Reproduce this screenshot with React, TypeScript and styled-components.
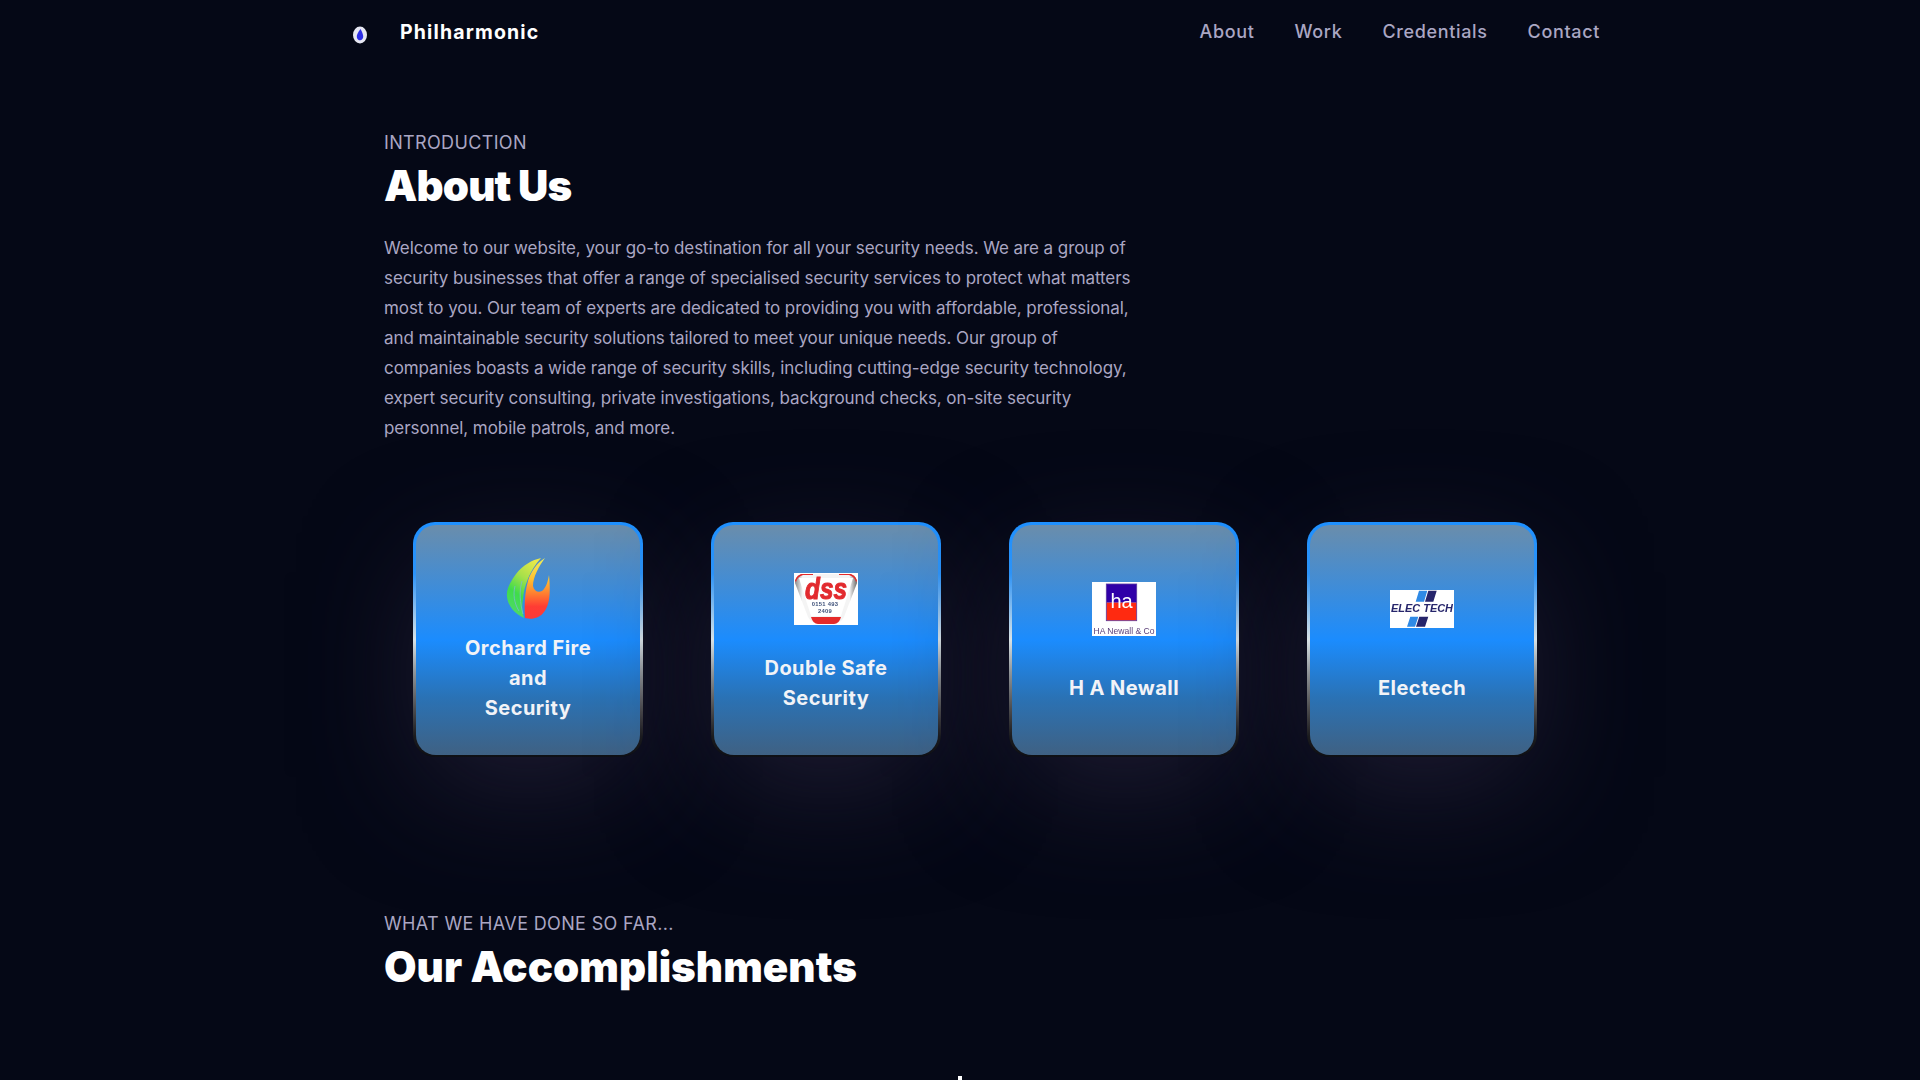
import React from "react";
import styled, { createGlobalStyle } from "styled-components";

const Global = createGlobalStyle`
  html, body { margin: 0; padding: 0; background: #050816; overflow: hidden; }
  body { font-family: Inter, "Open Sans", sans-serif; }
`;

const Page = styled.div`
  height: 1080px;
  overflow: hidden;
  background: #050816;
`;

const Nav = styled.nav`
  width: 1280px;
  height: 63px;
  margin: 0 auto;
  display: flex;
  align-items: center;
  justify-content: space-between;
`;

const Brand = styled.div`
  display: flex;
  align-items: center;
`;

const BrandName = styled.span`
  color: #fff;
  font-size: 19.5px;
  font-weight: 700;
  letter-spacing: 1.15px;
`;

const NavLinks = styled.ul`
  display: flex;
  gap: 40px;
  margin: 0;
  padding: 0;
  list-style: none;
`;

const NavLink = styled.li`
  color: #aaa6c3;
  font-size: 18px;
  font-weight: 500;
  line-height: 27px;
  letter-spacing: 0.65px;
`;

const Main = styled.main`
  width: 1152px;
  margin: 0 auto;
  padding-top: 66px;
`;

const Eyebrow = styled.p`
  margin: 0;
  color: #aaa6c3;
  font-size: 18px;
  line-height: 27px;
  letter-spacing: 0.35px;
  text-transform: uppercase;
`;

const Heading = styled.h2<{ $tracking: number }>`
  margin: 0;
  color: #fff;
  font-size: 42px;
  font-weight: 900;
  line-height: 60px;
  letter-spacing: ${(p) => p.$tracking}px;
`;

const Intro = styled.p`
  width: 755px;
  margin: 16px 0 -1px;
  padding-top: 1px;
  color: #aaa6c3;
  font-size: 17px;
  line-height: 30px;
  letter-spacing: -0.075px;
`;

const Cards = styled.div`
  display: flex;
  gap: 68px;
  margin-top: 80px;
  padding-left: 29px;
`;

const CardFrame = styled.div`
  width: 230px;
  height: 235px;
  box-sizing: border-box;
  padding: 3px 3px 2px;
  border-radius: 22px;
  background: linear-gradient(180deg, #1e90ff 0%, #2c93f8 22%, #a9cdea 42%, #d8e2e6 50%, #8f9498 64%, #4a4a4c 80%, #1c1c1f 91%, #0e0f14 100%);
  box-shadow: 0 35px 120px -15px #211e35;
`;

const CardBody = styled.div`
  height: 100%;
  box-sizing: border-box;
  padding: 20px 48px;
  border-radius: 20px;
  display: flex;
  flex-direction: column;
  align-items: center;
  justify-content: space-evenly;
  background: linear-gradient(180deg, #6a8dab 0%, #1b8cfe 50%, #2a72b5 75%, #3f6183 100%);
`;

const LogoBox = styled.div`
  width: 64px;
  height: 64px;
  display: flex;
  align-items: center;
  justify-content: center;
  svg { display: block; filter: blur(0.25px); }
`;

const CardTitle = styled.h3`
  margin: 0;
  color: #f2f3f7;
  font-size: 20px;
  font-weight: 700;
  line-height: 30px;
  text-align: center;
  white-space: pre-line;
  width: 180px;
  letter-spacing: 0.45px;
`;

const SecondEyebrow = styled(Eyebrow)`
  margin-top: 153px;
`;

const Timeline = styled.div`
  width: 4px;
  height: 40px;
  margin: 79px auto 0;
  background: #fff;
`;

const BrandIcon = () => (
  <svg width="80" height="64" viewBox="0 0 80 64" aria-hidden="true">
    <ellipse cx="40" cy="35" rx="7" ry="8.5" fill="#e6e7f2" />
    <path d="M40.5 29 C38 32 36.6 35 36.8 37 C37 39.5 39 40.5 40.4 40.3 C42.4 40 43.4 38 43.2 36 C43 33.5 41.5 31 40.5 29 Z" fill="#2d2ee6" />
  </svg>
);

const FlameLogo = () => (
  <svg width="64" height="64" viewBox="0 0 64 64" aria-hidden="true">
    <defs>
      <linearGradient id="leaf" x1="0.7" y1="0" x2="0.3" y2="1">
        <stop offset="0" stopColor="#e8e84a" />
        <stop offset="0.35" stopColor="#a6e04a" />
        <stop offset="0.65" stopColor="#3fdc4a" />
        <stop offset="1" stopColor="#4fd96a" />
      </linearGradient>
      <linearGradient id="fire" x1="0.5" y1="0" x2="0.5" y2="1">
        <stop offset="0" stopColor="#eef05a" />
        <stop offset="0.35" stopColor="#ffc030" />
        <stop offset="0.6" stopColor="#ff7a30" />
        <stop offset="0.8" stopColor="#ff3c34" />
        <stop offset="1" stopColor="#fb3a3a" />
      </linearGradient>
    </defs>
    <path d="M45 1 C36 3 27 8 20 17 C14 25 10 33 11 40 C12 49 19 57 28 61 C26 54 26 47 27 42 C28 30 33 14 45 1 Z" fill="url(#leaf)" />
    <path d="M19 29 C17 37 18 46 23 54 M26 24 C23 34 24 46 27 57" stroke="#7ab8d8" strokeWidth="1" fill="none" opacity="0.75" />
    <path d="M49 1 C41 6 35 14 32 24 C29 34 28 48 29 61 C36 63 44 61 48 55 C53 49 55 38 53 18 C52 24 50 31 46 34 C42 36 38 34 37 29 C37 20 43 9 49 1 Z" fill="url(#fire)" />
  </svg>
);

const DssLogo = () => (
  <svg width="64" height="52" viewBox="0 0 64 52" aria-hidden="true">
    <defs>
      <linearGradient id="rim" x1="0" y1="0" x2="1" y2="0">
        <stop offset="0" stopColor="#8a8a8a" />
        <stop offset="0.12" stopColor="#f4f4f4" />
        <stop offset="0.88" stopColor="#f4f4f4" />
        <stop offset="1" stopColor="#6a6a6a" />
      </linearGradient>
    </defs>
    <rect width="64" height="52" fill="#fff" />
    <path d="M8 1 L56 1 Q63 3 63 10 L50 44 Q46 51 40 51 L24 51 Q18 51 14 44 L1 10 Q1 3 8 1 Z" fill="url(#rim)" />
    <path d="M5 5 L59 5 L47 43 L17 43 Z" fill="#fff" />
    <path d="M7 1 L19 1 L19 2 L9 2 Q3 4 2 9 L1 8 Q2 3 7 1 Z M45 1 L57 1 Q62 3 63 8 L62 9 Q61 4 55 2 L45 2 Z" fill="#e52a2a" />
    <path d="M17 44 L47 44 Q45 51 40 51 L24 51 Q19 51 17 44 Z" fill="#e52a2a" />
    <text x="11" y="25.5" textLength="42" lengthAdjust="spacingAndGlyphs" fontFamily="'Liberation Sans', sans-serif" fontStyle="italic" fontWeight="700" fontSize="29" fill="#e22a2e" stroke="#e22a2e" strokeWidth="1">dss</text>
    <text x="31" y="33" textAnchor="middle" fontFamily="'Liberation Sans', sans-serif" fontWeight="700" fontSize="5.8" fill="#3c4f78" letterSpacing="0.3">0151 493</text>
    <text x="31" y="40.3" textAnchor="middle" fontFamily="'Liberation Sans', sans-serif" fontWeight="700" fontSize="5.8" fill="#3c4f78" letterSpacing="0.3">2409</text>
  </svg>
);

const NewallLogo = () => (
  <svg width="64" height="54" viewBox="0 0 64 54" aria-hidden="true">
    <rect width="64" height="54" fill="#fff" />
    <rect x="14.3" y="2" width="30.4" height="18.7" fill="#3000a8" />
    <rect x="14.3" y="20.7" width="30.4" height="18" fill="#ff2a10" />
    <rect x="14.3" y="2" width="30.4" height="36.7" fill="none" stroke="#5a3aa0" strokeWidth="0.8" />
    <text x="29.5" y="26" textAnchor="middle" fontFamily="'Liberation Sans', sans-serif" fontSize="20" fill="#fff">ha</text>
    <text x="1.5" y="52" textLength="61" lengthAdjust="spacingAndGlyphs" fontFamily="'Liberation Sans', sans-serif" fontSize="8.4" fill="#5b3f78">HA Newall &amp; Co</text>
  </svg>
);

const ElecLogo = () => (
  <svg width="64" height="38" viewBox="0 0 64 38" aria-hidden="true">
    <rect width="64" height="38" fill="#fff" />
    <path d="M29 .7 L37.3 .7 L34 11.7 L25.7 11.7 Z M20.3 26.7 L28.3 26.7 L25 36.7 L17 36.7 Z" fill="#2f8ae6" />
    <path d="M38.3 .7 L46.7 .7 L43.3 11.7 L35 11.7 Z M29.3 26.7 L38.3 26.7 L35 36.7 L26 36.7 Z" fill="#26256b" />
    <text x="1" y="22.3" textLength="62" lengthAdjust="spacingAndGlyphs" fontFamily="'Liberation Sans', sans-serif" fontStyle="italic" fontWeight="700" fontSize="11" fill="#26256b">ELEC TECH</text>
  </svg>
);

const companies = [
  { title: "Orchard Fire\nand\nSecurity", Logo: FlameLogo },
  { title: "Double Safe\nSecurity", Logo: DssLogo },
  { title: "H A Newall", Logo: NewallLogo },
  { title: "Electech", Logo: ElecLogo },
];

const links = ["About", "Work", "Credentials", "Contact"];

export default function App() {
  return (
    <Page>
      <Global />
      <Nav>
        <Brand>
          <BrandIcon />
          <BrandName>Philharmonic</BrandName>
        </Brand>
        <NavLinks>
          {links.map((l) => (
            <NavLink key={l}>{l}</NavLink>
          ))}
        </NavLinks>
      </Nav>
      <Main>
        <Eyebrow>Introduction</Eyebrow>
        <Heading $tracking={-0.85}>About Us</Heading>
        <Intro>
          Welcome to our website, your go-to destination for all your security needs. We are a group of security businesses that offer a range of specialised security services to protect what matters most to you. Our team of experts are dedicated to providing you with affordable, professional, and maintainable security solutions tailored to meet your unique needs. Our group of companies boasts a wide range of security skills, including cutting-edge security technology, expert security consulting, private investigations, background checks, on-site security personnel, mobile patrols, and more.
        </Intro>
        <Cards>
          {companies.map(({ title, Logo }) => (
            <CardFrame key={title}>
              <CardBody>
                <LogoBox>
                  <Logo />
                </LogoBox>
                <CardTitle>{title}</CardTitle>
              </CardBody>
            </CardFrame>
          ))}
        </Cards>
        <SecondEyebrow>What we have done so far...</SecondEyebrow>
        <Heading $tracking={0.05}>Our Accomplishments</Heading>
        <Timeline />
      </Main>
    </Page>
  );
}
